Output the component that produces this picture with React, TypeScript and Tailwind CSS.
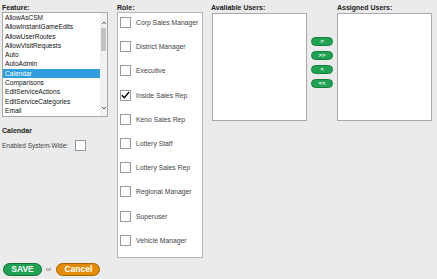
import React from "react";

const features = [
  "AllowAsCSM",
  "AllowInstantGameEdits",
  "AllowUserRoutes",
  "AllowVisitRequests",
  "Auto",
  "AutoAdmin",
  "Calendar",
  "Comparisons",
  "EditServiceActions",
  "EditServiceCategories",
  "Email",
  "EditUsers",
];

const roles = [
  { name: "Corp Sales Manager", checked: false },
  { name: "District Manager", checked: false },
  { name: "Executive", checked: false },
  { name: "Inside Sales Rep", checked: true },
  { name: "Keno Sales Rep", checked: false },
  { name: "Lottery Staff", checked: false },
  { name: "Lottery Sales Rep", checked: false },
  { name: "Regional Manager", checked: false },
  { name: "Superuser", checked: false },
  { name: "Vehicle Manager", checked: false },
];

const Label = ({ children }: { children: React.ReactNode }) => (
  <div className="h-[9px] text-[7px] leading-[9px] font-bold text-[#222]">{children}</div>
);

const Check = ({ checked }: { checked?: boolean }) => (
  <div className="w-[11px] h-[11px] border border-[#9a9a9a] bg-white flex items-center justify-center shrink-0">
    {checked && (
      <svg width="10" height="10" viewBox="0 0 10 10">
        <path d="M1 5.2 L3.8 8 L9 1.5" fill="none" stroke="#000" strokeWidth="1.6" />
      </svg>
    )}
  </div>
);

const Arrow = ({ label }: { label: string }) => (
  <button className="w-[22px] h-[9px] rounded-full bg-[#1fa352] border border-[#16803e] text-white text-[6px] font-bold leading-[7px] flex items-center justify-center">
    {label}
  </button>
);

export default function App() {
  return (
    <div className="w-[437px] h-[279px] bg-[#ebebeb] overflow-hidden font-['Liberation_Sans',Arial,sans-serif] text-[#222]">
      <div className="flex pt-[3px] pl-[2px]">
        {/* feature column */}
        <div className="w-[106px]">
          <Label>Feature:</Label>
          <div className="h-[105px] border border-[#a9a9a9] bg-white flex">
            <div className="flex-1 overflow-hidden">
              {features.map((f) => (
                <div
                  key={f}
                  className={
                    f === "Calendar"
                      ? "h-[9.3px] leading-[9.3px] text-[6.6px] pl-[2px] bg-[#2e9fdc] text-white"
                      : "h-[9.3px] leading-[9.3px] text-[6.6px] pl-[2px] text-[#111]"
                  }
                >
                  {f}
                </div>
              ))}
            </div>
            <div className="w-[7px] bg-[#f1f1f1] flex flex-col items-center">
              <svg width="6" height="8" viewBox="0 0 6 8" className="mt-[6px]">
                <path d="M1 5 L3 3 L5 5" fill="none" stroke="#555" strokeWidth="1" />
              </svg>
              <div className="w-[5px] h-[23px] bg-[#c3c3c3] mt-[1px]" />
              <div className="flex-1" />
              <svg width="6" height="8" viewBox="0 0 6 8" className="mb-[4px]">
                <path d="M1 3 L3 5 L5 3" fill="none" stroke="#555" strokeWidth="1" />
              </svg>
            </div>
          </div>
          <div className="mt-[9px] text-[7px] font-bold leading-[9px]">Calendar</div>
          <div className="mt-[5px] flex items-center gap-[7px]">
            <span className="text-[6.5px] text-[#444]">Enabled System-Wide:</span>
            <Check />
          </div>
        </div>

        {/* role column */}
        <div className="w-[86px] ml-[9px]">
          <Label>Role:</Label>
          <div className="h-[246px] border border-[#b5b5b5] bg-white pt-[4px] pl-[2px]">
            {roles.map((r) => (
              <div key={r.name} className="h-[24.2px] flex items-start gap-[5px]">
                <Check checked={r.checked} />
                <span className="text-[6.8px] leading-[11px] text-[#444]">{r.name}</span>
              </div>
            ))}
          </div>
        </div>

        {/* available users */}
        <div className="w-[96px] ml-[8px]">
          <Label>Avaliable Users:</Label>
          <div className="h-[108px] mt-[1px] ml-[1px] border border-[#a9a9a9] bg-white" />
        </div>

        {/* move buttons */}
        <div className="w-[22px] ml-[4px] pt-[34px] flex flex-col gap-[5px]">
          <Arrow label=">" />
          <Arrow label=">>" />
          <Arrow label="<" />
          <Arrow label="<<" />
        </div>

        {/* assigned users */}
        <div className="w-[95px] ml-[4px]">
          <Label>Assigned Users:</Label>
          <div className="h-[108px] mt-[1px] border border-[#a9a9a9] bg-white" />
        </div>
      </div>

      <div className="flex items-center mt-[5px] pl-[3px]">
        <button className="w-[39px] h-[13px] rounded-full bg-[#1fa352] border border-[#15733a] text-white text-[8.5px] font-bold leading-[11px]">
          SAVE
        </button>
        <span className="text-[6px] text-[#666] ml-[4px] mr-[5px]">or</span>
        <button className="w-[44px] h-[13px] rounded-full bg-[#e38c06] border border-[#a86300] text-white text-[8.5px] font-bold leading-[11px]">
          Cancel
        </button>
      </div>
    </div>
  );
}
